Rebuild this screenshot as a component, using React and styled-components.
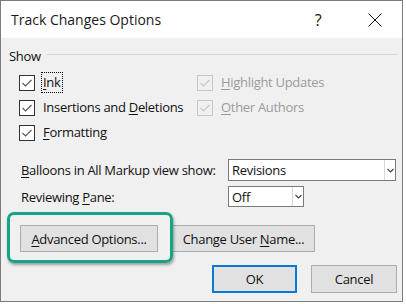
import React from 'react';
import styled, { createGlobalStyle } from 'styled-components';

const Global = createGlobalStyle`
  html, body { margin: 0; padding: 0; background: #ffffff; }
  body { font-family: "Open Sans", "Noto Sans", sans-serif; }
`;

const FONT = `"Open Sans", "Noto Sans", "DejaVu Sans", sans-serif`;

const Window = styled.div`
  position: relative;
  box-sizing: border-box;
  width: 403px;
  height: 302px;
  border: 1px solid #7c7c7c;
  background: #f0f0f0;
  display: flex;
  flex-direction: column;
  font-family: ${FONT};
  font-size: 13px;
  letter-spacing: -0.3px;
  color: #111;
  white-space: nowrap;
`;

const TitleBar = styled.div`
  height: 37px;
  flex: none;
  background: #ffffff;
  display: flex;
  align-items: center;
  padding: 0 4px 0 10px;
`;

const Title = styled.div`
  flex: 1;
  font-size: 14px;
  letter-spacing: 0;
  color: #1a1a1a;
  margin-top: -1px;
`;

const TitleButton = styled.div`
  width: ${(p) => p.$w}px;
  margin-left: ${(p) => p.$ml || 0}px;
  height: 30px;
  display: flex;
  align-items: center;
  justify-content: center;
  font-size: 16px;
  color: #111;
`;

const Content = styled.div`
  flex: 1;
  display: flex;
  flex-direction: column;
  padding: 0 5px 0 8px;
`;

const GroupHeader = styled.div`
  margin-top: 9px;
  height: 18px;
  display: flex;
  align-items: center;
  line-height: 18px;
`;

const GroupRule = styled.div`
  flex: 1;
  height: 1px;
  background: #d5d5d5;
  margin: -3px 0 0 6px;
`;

const CheckGrid = styled.div`
  margin-top: 5px;
  padding-left: 10px;
  display: grid;
  grid-template-columns: 178px 1fr;
  grid-auto-rows: 25px;
`;

const CheckItem = styled.div`
  display: flex;
  align-items: center;
  color: ${(p) => (p.$disabled ? '#9b9b9b' : '#111')};
`;

const CheckLabel = styled.span`
  margin-left: 6px;
  padding: 1px 1px;
  line-height: 17px;
  border: 1px dotted ${(p) => (p.$focus ? '#000' : 'transparent')};
`;

const Key = styled.span`
  text-decoration: underline;
  text-underline-offset: 2px;
`;

const FieldRow = styled.div`
  display: flex;
  align-items: center;
  padding-left: 12px;
  margin-top: ${(p) => p.$mt}px;
`;

const FieldLabel = styled.div`
  width: 207px;
  flex: none;
`;

const Select = styled.div`
  box-sizing: border-box;
  width: ${(p) => p.$w}px;
  height: ${(p) => p.$h}px;
  background: #ffffff;
  border: 1px solid #7a7a7a;
  display: flex;
  align-items: stretch;
`;

const SelectValue = styled.div`
  flex: 1;
  padding-left: 3px;
  display: flex;
  align-items: center;
`;

const SelectArrow = styled.div`
  width: 10px;
  border-left: 1px solid #d6d6d6;
  display: flex;
  align-items: center;
  justify-content: center;
`;

const ButtonRow = styled.div`
  display: flex;
  gap: 14px;
  margin-top: ${(p) => p.$mt}px;
  padding-left: ${(p) => p.$pl || 0}px;
  justify-content: ${(p) => (p.$end ? 'flex-end' : 'flex-start')};
`;

const Button = styled.div`
  box-sizing: border-box;
  width: ${(p) => p.$w}px;
  height: ${(p) => p.$h}px;
  background: #e1e1e1;
  border: ${(p) => (p.$default ? '2px solid #0a78d4' : '1px solid #adadad')};
  display: flex;
  align-items: center;
  justify-content: center;
  color: #111;
`;

const Highlight = styled.div`
  position: absolute;
  left: 6px;
  top: 211px;
  width: 166px;
  height: 51px;
  box-sizing: border-box;
  border: 3px solid #16a386;
  border-radius: 7px;
  box-shadow: 1px 2px 3px rgba(0, 0, 0, 0.35);
  pointer-events: none;
`;

const CheckBox = ({ disabled }) => {
  const c = disabled ? '#c6c6c6' : '#333333';
  const m = disabled ? '#c6c6c6' : '#555555';
  return (
    <svg width="16" height="16" viewBox="0 0 16 16" style={{ flex: 'none' }}>
      <rect x="0.5" y="0.5" width="15" height="15" fill={disabled ? '#f0f0f0' : '#ffffff'} stroke={c} />
      <polyline points="3.5,8 6.5,11 12.5,5" fill="none" stroke={m} strokeWidth="1.1" />
    </svg>
  );
};

const Chevron = () => (
  <svg width="7" height="5" viewBox="0 0 7 5">
    <polyline points="0.5,1 3.5,4 6.5,1" fill="none" stroke="#444" strokeWidth="1.1" />
  </svg>
);

const CloseIcon = () => (
  <svg width="14" height="14" viewBox="0 0 14 14">
    <path d="M0.5 0.5 L13.5 13.5 M13.5 0.5 L0.5 13.5" stroke="#111" strokeWidth="1" />
  </svg>
);

export default function App() {
  return (
    <>
      <Global />
      <Window>
        <TitleBar>
          <Title>Track Changes Options</Title>
          <TitleButton $w={40}>?</TitleButton>
          <TitleButton $w={46} $ml={14}>
            <CloseIcon />
          </TitleButton>
        </TitleBar>
        <Content>
          <GroupHeader>
            Show
            <GroupRule />
          </GroupHeader>
          <CheckGrid>
            <CheckItem>
              <CheckBox />
              <CheckLabel $focus>
                <Key>I</Key>nk
              </CheckLabel>
            </CheckItem>
            <CheckItem $disabled>
              <CheckBox disabled />
              <CheckLabel>
                <Key>H</Key>ighlight Updates
              </CheckLabel>
            </CheckItem>
            <CheckItem>
              <CheckBox />
              <CheckLabel>
                Insertions and <Key>D</Key>eletions
              </CheckLabel>
            </CheckItem>
            <CheckItem $disabled>
              <CheckBox disabled />
              <CheckLabel>
                <Key>O</Key>ther Authors
              </CheckLabel>
            </CheckItem>
            <CheckItem>
              <CheckBox />
              <CheckLabel>
                <Key>F</Key>ormatting
              </CheckLabel>
            </CheckItem>
          </CheckGrid>
          <FieldRow $mt={14}>
            <FieldLabel>
              <Key>B</Key>alloons in All Markup view show:
            </FieldLabel>
            <Select $w={168} $h={22}>
              <SelectValue>Revisions</SelectValue>
              <SelectArrow>
                <Chevron />
              </SelectArrow>
            </Select>
          </FieldRow>
          <FieldRow $mt={5}>
            <FieldLabel>
              Reviewing <Key>P</Key>ane:
            </FieldLabel>
            <Select $w={76} $h={21}>
              <SelectValue>Off</SelectValue>
              <SelectArrow>
                <Chevron />
              </SelectArrow>
            </Select>
          </FieldRow>
          <ButtonRow $mt={18} $pl={11}>
            <Button $w={138} $h={27}>
              <span>
                <Key>A</Key>dvanced Options...
              </span>
            </Button>
            <Button $w={143} $h={27}>
              <span>
                Change User <Key>N</Key>ame...
              </span>
            </Button>
          </ButtonRow>
          <ButtonRow $mt={13} $end>
            <Button $w={85} $h={28} $default>
              OK
            </Button>
            <Button $w={86} $h={28}>
              Cancel
            </Button>
          </ButtonRow>
        </Content>
        <Highlight />
      </Window>
    </>
  );
}
